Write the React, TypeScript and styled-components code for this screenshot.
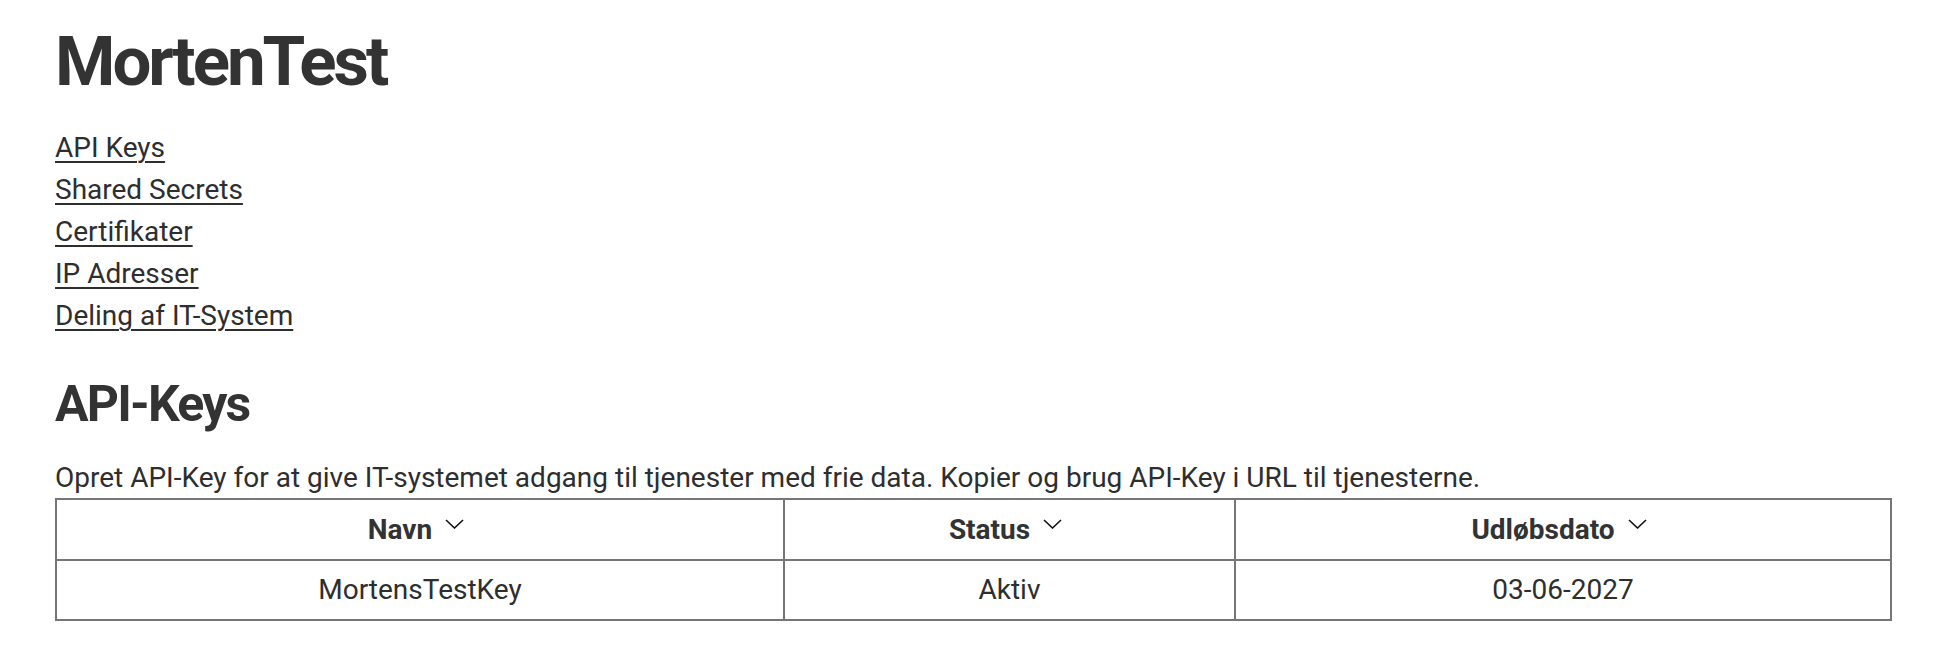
import React from 'react';
import styled, { createGlobalStyle } from 'styled-components';

const Global = createGlobalStyle`
  html, body { margin: 0; padding: 0; background: #ffffff; }
  body {
    font-family: Roboto, "Noto Sans", "Liberation Sans", Arial, sans-serif;
    color: #333333;
  }
`;

const Page = styled.main`
  padding: 20.7px 50px 40px 55px;
`;

const Title = styled.h1`
  margin: 0;
  font-size: 69px;
  line-height: 82.8px;
  font-weight: 700;
  letter-spacing: -3px;
  color: #333333;
`;

const Nav = styled.nav`
  margin-top: 23.6px;
  display: flex;
  flex-direction: column;
  align-items: flex-start;
`;

const NavLink = styled.a`
  font-size: 28px;
  line-height: 42px;
  color: #2e2e2e;
  text-decoration: underline;
  text-decoration-thickness: 1.5px;
  text-underline-offset: 4px;
`;

const SectionTitle = styled.h2`
  margin: 36.5px 0 0;
  font-size: 50px;
  line-height: 60px;
  font-weight: 700;
  letter-spacing: -1.8px;
  color: #333333;
`;

const Intro = styled.p`
  margin: 23.1px 0 0;
  font-size: 28px;
  line-height: 41.3px;
  color: #2e2e2e;
`;

const Table = styled.table`
  width: 100%;
  border-collapse: collapse;
  table-layout: fixed;
  font-size: 28px;
  line-height: 42px;
  color: #2e2e2e;
`;

const HeadCell = styled.th`
  border: 2px solid #767676;
  padding: 9.5px 8px 7.5px;
  text-align: center;
  font-weight: 700;
  color: #333333;
`;

const Cell = styled.td`
  border: 2px solid #767676;
  padding: 8px;
  text-align: center;
  font-weight: 400;
`;

const SortLabel = styled.span`
  display: inline-flex;
  align-items: flex-start;
`;

const Chevron = styled.svg`
  width: 19px;
  height: 10px;
  margin: 9.5px 8px 0 13px;
  flex: none;
`;

const SortIcon = () => (
  <Chevron viewBox="0 0 19 10" aria-hidden="true">
    <path d="M1 1 L9.5 9 L18 1" fill="none" stroke="#111" strokeWidth="1.6" />
  </Chevron>
);

const links = ['API Keys', 'Shared Secrets', 'Certifikater', 'IP Adresser', 'Deling af IT-System'];

const columns = [
  { label: 'Navn', width: '728px' },
  { label: 'Status', width: '451px' },
  { label: 'Udløbsdato', width: 'auto' },
];

const rows = [{ name: 'MortensTestKey', status: 'Aktiv', expires: '03-06-2027' }];

export default function App() {
  return (
    <>
      <Global />
      <Page>
        <Title>MortenTest</Title>
        <Nav>
          {links.map((l) => (
            <NavLink key={l} href="#">
              {l}
            </NavLink>
          ))}
        </Nav>
        <SectionTitle>API-Keys</SectionTitle>
        <Intro>
          Opret API-Key for at give IT-systemet adgang til tjenester med frie data. Kopier og brug API-Key i URL til tjenesterne.
        </Intro>
        <Table>
          <colgroup>
            {columns.map((c) => (
              <col key={c.label} style={{ width: c.width }} />
            ))}
          </colgroup>
          <thead>
            <tr>
              {columns.map((c) => (
                <HeadCell key={c.label}>
                  <SortLabel>
                    {c.label}
                    <SortIcon />
                  </SortLabel>
                </HeadCell>
              ))}
            </tr>
          </thead>
          <tbody>
            {rows.map((r) => (
              <tr key={r.name}>
                <Cell>{r.name}</Cell>
                <Cell>{r.status}</Cell>
                <Cell>{r.expires}</Cell>
              </tr>
            ))}
          </tbody>
        </Table>
      </Page>
    </>
  );
}
